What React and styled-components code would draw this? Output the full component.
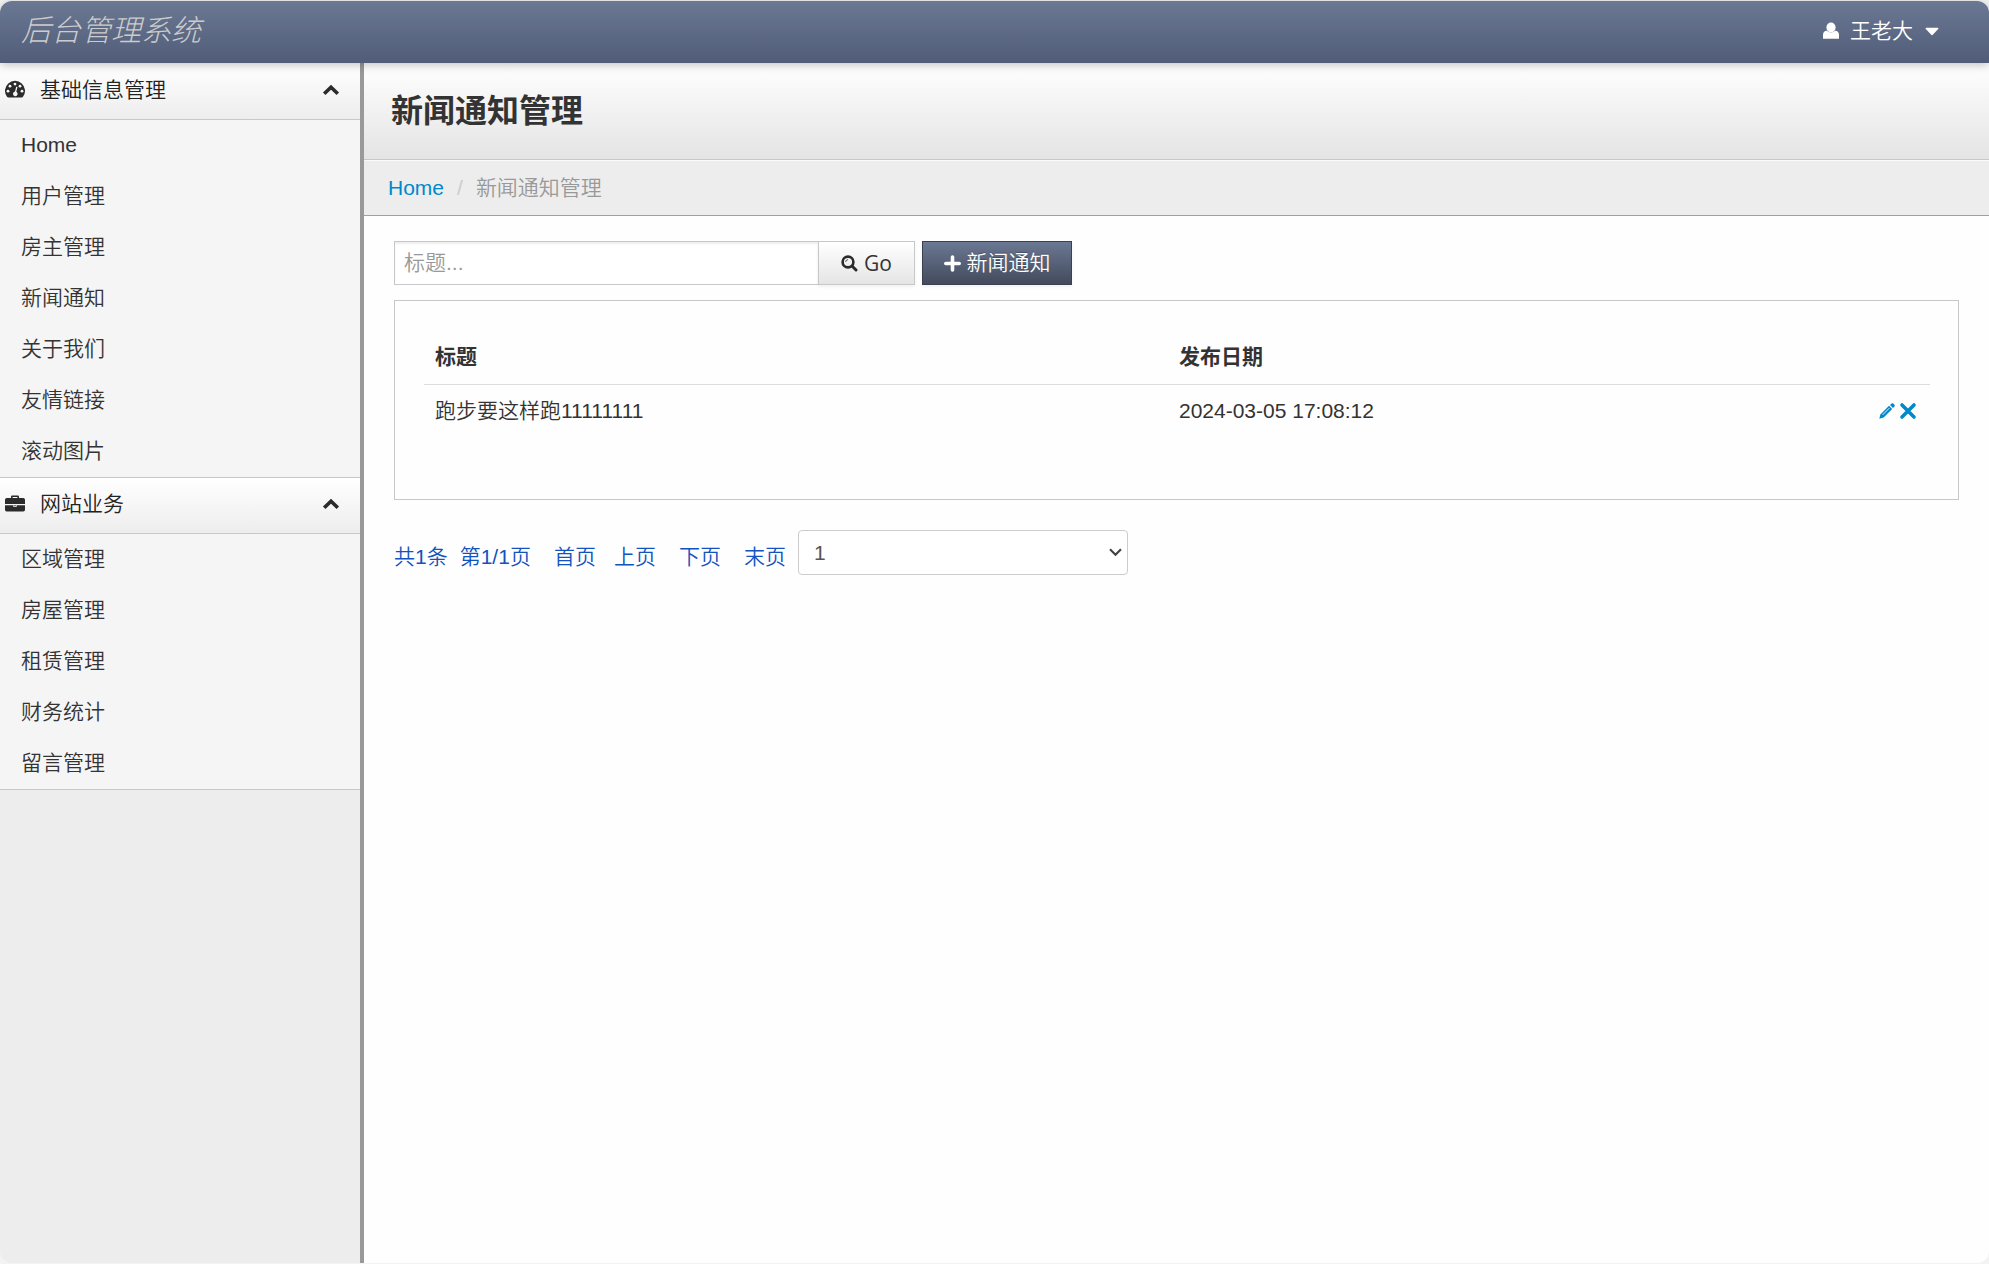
import React, { useState } from 'react'
import styled, { createGlobalStyle, css } from 'styled-components'

const GlobalStyle = createGlobalStyle`
  * {
    box-sizing: border-box;
  }

  body {
    margin: 0;
    background: #f3f3f3;
    color: #333;
    font-family: 'Liberation Sans', 'Noto Sans CJK SC', sans-serif;
    font-size: 21px;
    font-weight: 350;
    line-height: 30px;
  }

  a {
    color: #0088cc;
    text-decoration: none;
  }
`

const Page = styled.div`
  display: flex;
  flex-direction: column;
  min-height: 100vh;
  padding: 1px 0;
`

const Navbar = styled.header`
  display: flex;
  justify-content: space-between;
  align-items: center;
  height: 62px;
  padding: 0 50px 2px 21px;
  border-radius: 12px 12px 0 0;
  background: linear-gradient(#6b7893, #505c78);
  box-shadow: 0 2px 10px rgba(0, 0, 0, 0.25);
  z-index: 1;
`

const Brand = styled.a`
  color: #ccc;
  font-size: 30px;
  font-style: italic;
  font-weight: 300;
`

const UserMenu = styled.button`
  display: flex;
  align-items: center;
  gap: 10px;
  padding: 0;
  border: none;
  background: none;
  color: white;
  font: inherit;

  span {
    margin-right: 2px;
  }
`

const Body = styled.div`
  flex: 1;
  display: flex;
`

const Sidebar = styled.nav`
  width: 364px;
  flex-shrink: 0;
  border-right: 4px solid #999;
  border-radius: 0 0 0 12px;
  background: #ededed;
`

const MenuHeader = styled.button`
  display: flex;
  align-items: center;
  width: 100%;
  height: 57px;
  padding: 0 20px 3px 4px;
  border: solid #c8c8c8;
  border-width: 1px 0;
  background: linear-gradient(#fff, #ededed);
  color: #222;
  font: inherit;

  ${(props) =>
    props.$first &&
    css`
      border-top-color: #fff;
    `}

  span {
    flex: 1;
    margin-left: 14px;
    text-align: left;
  }
`

const MenuList = styled.ul`
  margin: 0;
  padding: 0;
  list-style: none;
  background: #f5f5f5;

  a {
    display: block;
    padding: 10px 21px 11px;
    color: #333;
  }
`

const MenuEnd = styled.div`
  height: 1px;
  background: #c8c8c8;
`

const Content = styled.main`
  flex: 1;
  min-width: 0;
  background: #fefefe;
  border-radius: 0 0 12px 0;
`

const TitleBar = styled.div`
  height: 97px;
  padding: 27px 27px 0;
  border-bottom: 1px solid #c8c8c8;
  background: linear-gradient(#fff, #e4e4e4);

  h1 {
    margin: 0;
    font-size: 32px;
    font-weight: 700;
    line-height: 42px;
  }
`

const Breadcrumb = styled.ol`
  display: flex;
  align-items: center;
  gap: 13px;
  height: 56px;
  margin: 0;
  padding: 0 24px 1px;
  border-top: 1px solid #fafafa;
  border-bottom: 1px solid #a0a0a0;
  background: #ededed;
  color: #999;
  list-style: none;

  li + li::before {
    content: '/';
    margin-right: 13px;
    color: #ccc;
  }
`

const Container = styled.div`
  padding: 25px 30px;
`

const Toolbar = styled.form`
  display: flex;
  height: 44px;
  margin-bottom: 15px;
`

const SearchInput = styled.input`
  width: 425px;
  padding: 0 9px;
  border: 1px solid #c8c8c8;
  border-radius: 0;
  background: #fff;
  box-shadow: inset 0 2px 2px rgba(0, 0, 0, 0.07);
  font: inherit;

  &:focus {
    outline: none;
  }

  &::placeholder {
    color: #999;
  }
`

const Button = styled.button`
  display: flex;
  align-items: center;
  justify-content: center;
  gap: 6px;
  width: 97px;
  padding: 0;
  margin-left: -1px;
  border: 1px solid #c8c8c8;
  background: linear-gradient(#fff, #e5e5e5);
  box-shadow: 0 2px 3px rgba(0, 0, 0, 0.05);
  color: #333;
  font: 400 21px 'Open Sans', 'Noto Sans', sans-serif;

  ${(props) =>
    props.$primary &&
    css`
      width: 150px;
      margin-left: 7px;
      border-color: #39404f;
      background: linear-gradient(#6b7893, #434a5c);
      color: white;
      font: inherit;
      text-shadow: 0 -1px 0 rgba(0, 0, 0, 0.25);
    `}
`

const Panel = styled.section`
  padding: 29px 28px 61px 29px;
  border: 1px solid #c8c8c8;
`

const Table = styled.table`
  width: 100%;
  border-collapse: collapse;
  table-layout: fixed;

  th,
  td {
    height: 54px;
    padding: 0 11px;
    text-align: left;
  }

  th {
    font-weight: 700;
  }

  td {
    border-top: 1px solid #ddd;
  }

  th:first-child {
    width: 49.4%;
  }
`

const Actions = styled.div`
  display: flex;
  justify-content: flex-end;
  align-items: center;
  gap: 3px;
  padding-right: 2px;

  a {
    display: flex;
  }
`

const Pager = styled.div`
  display: flex;
  align-items: center;
  gap: 12px;
  margin-top: 30px;
  color: #1353be;

  a,
  span {
    padding-top: 8px;
    color: inherit;
    white-space: nowrap;
  }
`

const PageLink = styled.a`
  margin-left: ${(props) => (props.$tight ? '6px' : '11px')};
`

const SelectWrap = styled.div`
  display: grid;
  align-items: center;
  width: 330px;

  select,
  svg {
    grid-area: 1 / 1;
  }

  svg {
    justify-self: end;
    margin-right: 6px;
    pointer-events: none;
  }
`

const PageSelect = styled.select`
  height: 45px;
  padding: 0 15px;
  border: 1px solid #ccc;
  border-radius: 4px;
  background: #fff;
  color: #555;
  font: inherit;
  appearance: none;
`

const IconUser = () => (
  <svg width="18" height="18" viewBox="0 0 18 18" fill="currentColor">
    <ellipse cx="9" cy="5.5" rx="4.6" ry="5" />
    <path d="M1 16.8V13Q1 9 4.8 8.8Q9 12.4 13.2 8.8Q17 9 17 13V16.8Z" />
  </svg>
)

const IconCaret = () => (
  <svg width="14" height="9" viewBox="0 0 14 9" fill="currentColor">
    <path d="M1.2.8H12.8Q14 1 13.2 2L8 7.6Q7 8.8 6 7.6L.8 2Q0 1 1.2.8Z" />
  </svg>
)

const IconDashboard = () => (
  <svg width="22" height="20" viewBox="0 0 22 20">
    <path
      d="M4.2 17.4Q3.5 17.4 3 16.8A10 10 0 1 1 19 16.8Q18.5 17.4 17.8 17.4Z"
      fill="#2b2b2b"
    />
    <g fill="#f6f6f6">
      <circle cx="4" cy="11.2" r="1.4" />
      <circle cx="6" cy="6.2" r="1.4" />
      <circle cx="11" cy="4.1" r="1.4" />
      <circle cx="16" cy="6.2" r="1.4" />
      <circle cx="18" cy="11.2" r="1.4" />
      <path d="M12.2 6.7L13.5 7.1L12.3 11.8A2.3 2.3 0 1 1 11 11.6Z" />
    </g>
  </svg>
)

const IconBriefcase = () => (
  <svg width="22" height="20" viewBox="0 0 22 20">
    <path
      fill="#2b2b2b"
      fillRule="evenodd"
      d="M7 4V2.7Q7 1.5 8.2 1.5H13.8Q15 1.5 15 2.7V4H19.2Q21 4 21 5.8V10H1V5.8Q1 4 2.8 4ZM8.6 3V4H13.4V3Z"
    />
    <path
      fill="#2b2b2b"
      d="M1 11.2H9.4V13H12.6V11.2H21V15.8Q21 17.4 19.4 17.4H2.6Q1 17.4 1 15.8Z"
    />
    <path fill="#2b2b2b" d="M10.2 11.2H11.8V12.3H10.2Z" />
  </svg>
)

const IconChevronUp = () => (
  <svg width="18" height="14" viewBox="0 0 18 14">
    <path
      d="M2.2 10.8L9 4.2L15.8 10.8"
      fill="none"
      stroke="#2b2b2b"
      strokeWidth="3.6"
    />
  </svg>
)

const IconSearch = () => (
  <svg width="17" height="17" viewBox="0 0 17 17" fill="none" stroke="#2b2b2b">
    <circle cx="7" cy="7" r="5.4" strokeWidth="2.6" />
    <path d="M11 11L15 15" strokeWidth="3" strokeLinecap="round" />
    <path d="M4.6 7Q4.8 4.8 7 4.6" strokeWidth="0.8" />
  </svg>
)

const IconPlus = () => (
  <svg width="17" height="17" viewBox="0 0 17 17">
    <path
      d="M8.5 2V15M1.8 8.5H15.2"
      stroke="currentColor"
      strokeWidth="3.6"
      strokeLinecap="round"
    />
  </svg>
)

const IconPencil = () => (
  <svg width="18" height="18" viewBox="0 0 18 18" fill="currentColor">
    <path d="M1.3 16.7L2.4 12.4L11 3.8L14.2 7L5.6 15.6Z" />
    <path d="M12 2.9L13.6 1.4Q14.4 .8 15.3 1.6L16.4 2.7Q17.2 3.5 16.5 4.4L15 6Z" />
    <path d="M4.6 12.9L11.4 6.1" stroke="#fff" strokeWidth="0.9" />
  </svg>
)

const IconRemove = () => (
  <svg width="18" height="18" viewBox="0 0 18 18">
    <path
      d="M3 3L15 15M15 3L3 15"
      stroke="currentColor"
      strokeWidth="3.6"
      strokeLinecap="round"
    />
  </svg>
)

const IconArrow = () => (
  <svg width="13" height="9" viewBox="0 0 13 9">
    <path
      d="M1 1.2L6.5 6.8L12 1.2"
      fill="none"
      stroke="#444"
      strokeWidth="2.2"
    />
  </svg>
)

const menus = [
  {
    title: '基础信息管理',
    icon: <IconDashboard />,
    items: [
      'Home',
      '用户管理',
      '房主管理',
      '新闻通知',
      '关于我们',
      '友情链接',
      '滚动图片',
    ],
  },
  {
    title: '网站业务',
    icon: <IconBriefcase />,
    items: ['区域管理', '房屋管理', '租赁管理', '财务统计', '留言管理'],
  },
]

const news = [{ title: '跑步要这样跑11111111', date: '2024-03-05 17:08:12' }]

function Menu({ title, icon, items, first }) {
  const [open, setOpen] = useState(true)

  return (
    <>
      <MenuHeader
        type="button"
        $first={first}
        aria-expanded={open}
        onClick={() => setOpen(!open)}
      >
        {icon}
        <span>{title}</span>
        <IconChevronUp />
      </MenuHeader>
      {open && (
        <MenuList>
          {items.map((item) => (
            <li key={item}>
              <a href="#">{item}</a>
            </li>
          ))}
        </MenuList>
      )}
    </>
  )
}

export default function App() {
  return (
    <Page>
      <GlobalStyle />
      <Navbar>
        <Brand href="#">后台管理系统</Brand>
        <UserMenu type="button">
          <IconUser />
          <span>王老大</span>
          <IconCaret />
        </UserMenu>
      </Navbar>
      <Body>
        <Sidebar>
          {menus.map((menu, i) => (
            <Menu key={menu.title} first={i === 0} {...menu} />
          ))}
          <MenuEnd />
        </Sidebar>
        <Content>
          <TitleBar>
            <h1>新闻通知管理</h1>
          </TitleBar>
          <Breadcrumb>
            <li>
              <a href="#">Home</a>
            </li>
            <li>新闻通知管理</li>
          </Breadcrumb>
          <Container>
            <Toolbar onSubmit={(e) => e.preventDefault()}>
              <SearchInput
                type="text"
                placeholder="标题..."
                aria-label="标题"
              />
              <Button type="submit">
                <IconSearch />
                Go
              </Button>
              <Button type="button" $primary>
                <IconPlus />
                新闻通知
              </Button>
            </Toolbar>
            <Panel>
              <Table>
                <thead>
                  <tr>
                    <th>标题</th>
                    <th>发布日期</th>
                    <th aria-label="操作" />
                  </tr>
                </thead>
                <tbody>
                  {news.map((row) => (
                    <tr key={row.title}>
                      <td>{row.title}</td>
                      <td>{row.date}</td>
                      <td>
                        <Actions>
                          <a href="#" aria-label="编辑">
                            <IconPencil />
                          </a>
                          <a href="#" aria-label="删除">
                            <IconRemove />
                          </a>
                        </Actions>
                      </td>
                    </tr>
                  ))}
                </tbody>
              </Table>
            </Panel>
            <Pager>
              <span>共1条</span>
              <span>第1/1页</span>
              <PageLink href="#">首页</PageLink>
              <PageLink href="#" $tight>
                上页
              </PageLink>
              <PageLink href="#">下页</PageLink>
              <PageLink href="#">末页</PageLink>
              <SelectWrap>
                <PageSelect aria-label="页码">
                  <option>1</option>
                </PageSelect>
                <IconArrow />
              </SelectWrap>
            </Pager>
          </Container>
        </Content>
      </Body>
    </Page>
  )
}
